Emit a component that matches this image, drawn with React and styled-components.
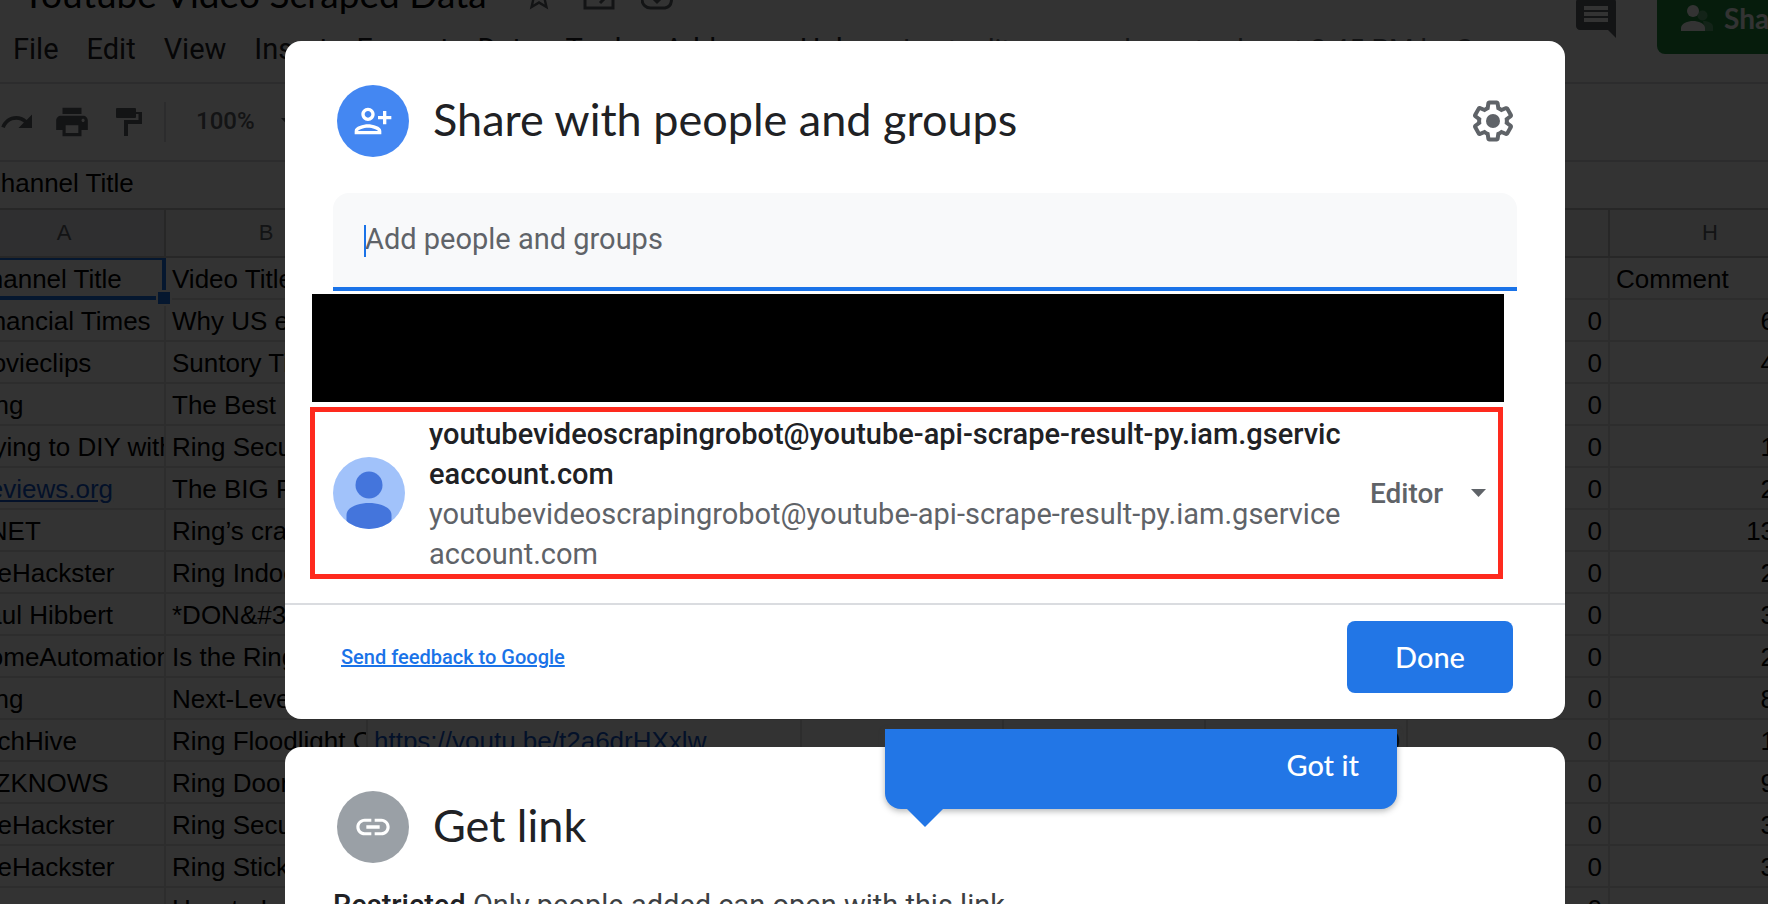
import React from "react";
import styled, { createGlobalStyle } from "styled-components";

const roboto = `Roboto, "Liberation Sans", sans-serif`;
const arial = `"Liberation Sans", Arial, sans-serif`;
const display = `Lato, Roboto, sans-serif`;

const GlobalStyle = createGlobalStyle`
  *, *::before, *::after { box-sizing: border-box; }
  body { margin: 0; background: #fff; font-family: ${roboto}; overflow: hidden; }
`;

const Page = styled.div`
  position: relative;
  height: 100vh;
  overflow: hidden;
`;

/* ---------- spreadsheet behind the dialog ---------- */

const Workbook = styled.div`
  width: calc(100% + 80px);
  margin: -24px 0 0 -36px;
`;

const Header = styled.header`
  display: flex;
  justify-content: space-between;
  border-bottom: 2px solid #dadce0;
`;

const TitleRow = styled.div`
  display: flex;
  align-items: center;
  gap: 26px;
  height: 40px;
  padding-left: 58px;
  color: #5f6368;
`;

const DocTitle = styled.h1`
  margin: 0 8px 0 0;
  padding-bottom: 4px;
  font: 400 37px/36px ${display};
  color: #000;
`;

const MenuBar = styled.nav`
  display: flex;
  align-items: center;
  gap: 28px;
  height: 66px;
  padding-left: 49px;
  font-size: 29px;
  color: #202124;
  white-space: nowrap;
`;

const LastEdit = styled.a`
  margin-left: 16px;
  font-size: 28px;
  color: #5f6368;
`;

const Actions = styled.div`
  display: flex;
  align-items: center;
  gap: 37px;
  height: 72px;
  margin-top: 6px;
  color: #5f6368;
`;

const ShareButton = styled.button`
  display: flex;
  align-items: center;
  gap: 11px;
  width: 155px;
  height: 72px;
  padding: 0 0 0 24px;
  border: 0;
  border-radius: 8px;
  background: #1e8e3e;
  color: #fff;
  font: 700 28px/40px ${display};
`;

const Toolbar = styled.div`
  display: flex;
  align-items: center;
  height: 78px;
  padding-left: 35px;
  border-bottom: 2px solid #dadce0;
  color: #5f6368;
`;

const Tool = styled.span`
  display: flex;
  margin-right: ${(p) => p.$after}px;
`;

const Rule = styled.span`
  width: 2px;
  height: 40px;
  margin-right: 30px;
  background: #dadce0;
`;

const Zoom = styled.span`
  margin-right: 26px;
  padding-bottom: 2px;
  font-size: 24px;
  font-weight: 500;
`;

const FormulaBar = styled.div`
  height: 48px;
  padding-left: 18px;
  border-bottom: 2px solid #c0c0c0;
  font: 26px/42px ${arial};
  color: #000;
`;

const Sheet = styled.table`
  width: 1848px;
  table-layout: fixed;
  border-collapse: separate;
  border-spacing: 0;
  font: 26px/42px ${arial};
  color: #000;
`;

const ColumnHead = styled.th`
  height: 48px;
  padding: 0;
  border-right: 2px solid #c0c0c0;
  border-bottom: 2px solid #c0c0c0;
  background: ${(p) => (p.$selected ? "#e8eaed" : "#f4f6f5")};
  color: #5f6368;
  font-size: 22px;
  font-weight: 400;
`;

const Cell = styled.td`
  position: relative;
  height: 42px;
  padding: 0;
  border-right: 2px solid #e0e0e0;
  border-bottom: 2px solid #e0e0e0;
`;

const CellText = styled.div`
  height: 40px;
  padding-left: 6px;
  padding-right: ${(p) => (p.$number ? 6 : 0)}px;
  overflow: hidden;
  white-space: nowrap;
  text-align: ${(p) => (p.$number ? "right" : "left")};

  a { color: #1155cc; }
`;

const Selection = styled.span`
  position: absolute;
  inset: 0 -2px -2px 0;
  z-index: 1;
  border: solid #1a73e8;
  border-width: 2px 4px 4px 2px;

  &::after {
    content: "";
    position: absolute;
    right: -10px;
    bottom: -10px;
    width: 16px;
    height: 16px;
    border: 2px solid #fff;
    background: #1a73e8;
  }
`;

const Backdrop = styled.div`
  position: absolute;
  inset: 0;
  z-index: 2;
  display: flex;
  flex-direction: column;
  gap: 28px;
  padding: 41px 203px 0 285px;
  background: rgba(0, 0, 0, 0.8);
`;

/* ---------- dialog cards ---------- */

const Card = styled.section`
  position: relative;
  flex: none;
  padding-top: 44px;
  border-radius: 16px;
  background: #fff;
  color: #202124;
`;

const CardHead = styled.div`
  display: flex;
  align-items: center;
  gap: 24px;
  padding: 0 48px 0 52px;
`;

const Badge = styled.span`
  display: flex;
  align-items: center;
  justify-content: center;
  flex: none;
  width: 72px;
  height: 72px;
  border-radius: 50%;
  background: ${(p) => p.$color};
  color: #fff;
`;

const CardTitle = styled.h2`
  flex: 1;
  margin: 0;
  padding-bottom: 4px;
  font: 400 45px/56px ${display};
`;

const IconButton = styled.button`
  display: flex;
  padding: 0;
  border: 0;
  background: none;
  color: #5f6368;
`;

const PeopleInput = styled.input`
  display: block;
  width: calc(100% - 96px);
  height: 98px;
  margin: 36px 48px 0;
  padding: 0 32px 2px;
  border: 0;
  border-bottom: 4px solid #1a73e8;
  border-radius: 16px 16px 0 0;
  outline: 0;
  background: #f8f9fa;
  font: 29px/40px ${roboto};
  color: #202124;
  caret-color: transparent;

  &::placeholder { color: #5f6368; opacity: 1; }
`;

const InputWrap = styled.label`
  position: relative;
  display: block;
`;

const Caret = styled.span`
  position: absolute;
  top: 32px;
  left: 79px;
  width: 2px;
  height: 32px;
  background: #1a73e8;
`;

const Redacted = styled.div`
  height: 108px;
  margin: 3px 61px 5px 27px;
  background: #000;
`;

const PersonRow = styled.div`
  display: flex;
  align-items: center;
  margin: 0 62px 0 25px;
  padding: 0 12px 0 18px;
  border: 5px solid #fe2a1e;
`;

const PersonText = styled.div`
  flex: 1;
  padding: 2px 0 0 24px;
  font-size: 29px;
  line-height: 40px;
  color: #5f6368;

  strong, span { display: block; }
  strong { font-weight: 500; color: #202124; }
`;

const RoleSelect = styled.select`
  appearance: none;
  margin-right: 27px;
  padding: 2px 0 0;
  border: 0;
  background: none;
  font: 500 28px/40px ${roboto};
  color: #5f6368;
`;

const CardFoot = styled.div`
  display: flex;
  align-items: center;
  justify-content: space-between;
  margin-top: 24px;
  padding: 16px 52px 26px 56px;
  border-top: 2px solid #dadce0;
`;

const FeedbackLink = styled.a`
  font-size: 20px;
  font-weight: 500;
  line-height: 24px;
  color: #1a73e8;
`;

const DoneButton = styled.button`
  width: 166px;
  height: 72px;
  border: 0;
  border-radius: 8px;
  background: #2276e6;
  color: #fff;
  font: 500 29px/40px ${display};
`;

const Access = styled.p`
  margin: 22px 48px 24px;
  font-size: 29px;
  line-height: 40px;
  color: #3c4043;

  b { font-weight: 500; color: #202124; }
`;

const Callout = styled.div`
  position: absolute;
  top: -18px;
  left: 600px;
  display: flex;
  justify-content: flex-end;
  width: 512px;
  height: 80px;
  padding: 16px 38px;
  border-radius: 0 0 16px 16px;
  background: #2276e6;
  box-shadow: 0 2px 6px rgba(60, 64, 67, 0.4);

  &::after {
    content: "";
    position: absolute;
    top: 100%;
    left: 22px;
    border: solid transparent;
    border-width: 18px 18px 0;
    border-top-color: #2276e6;
  }
`;

const GotIt = styled.button`
  height: 40px;
  padding: 0;
  border: 0;
  background: none;
  color: #fff;
  font: 500 29px/40px ${display};
`;

/* ---------- drawings ---------- */

const Icon = ({ size, d, children }) => (
  <svg width={size} height={size} viewBox="0 0 24 24" fill="currentColor" aria-hidden="true">
    {d && <path d={d} />}
    {children}
  </svg>
);

const paths = {
  star: "M22 9.24l-7.19-.62L12 2 9.19 8.63 2 9.24l5.46 4.73L5.82 21 12 17.27 18.18 21l-1.63-7.03L22 9.24zM12 15.4l-3.76 2.27 1-4.28-3.32-2.88 4.38-.38L12 6.1l1.71 4.04 4.38.38-3.32 2.88 1 4.28L12 15.4z",
  comment: "M20 2H4c-1.1 0-1.99.9-1.99 2L2 16c0 1.1.9 2 2 2h14l4 4V4c0-1.1-.9-2-2-2zm-2 12H6v-2h12v2zm0-3H6V9h12v2zm0-3H6V6h12v2z",
  redo: "M18.4 10.6C16.55 8.99 14.15 8 11.5 8c-4.65 0-8.58 3.03-9.96 7.22L3.9 16c1.05-3.19 4.05-5.5 7.6-5.5 1.95 0 3.73.72 5.12 1.88L13 16h9V7l-3.6 3.6z",
  print: "M19 8H5c-1.66 0-3 1.34-3 3v6h4v4h12v-4h4v-6c0-1.66-1.34-3-3-3zm-3 11H8v-5h8v5zm3-7c-.55 0-1-.45-1-1s.45-1 1-1 1 .45 1 1-.45 1-1 1zm-1-9H6v4h12V3z",
  addPerson: "M9 12c2.21 0 4-1.79 4-4s-1.79-4-4-4-4 1.79-4 4 1.79 4 4 4zm0-6c1.1 0 2 .9 2 2s-.9 2-2 2-2-.9-2-2 .9-2 2-2zm0 8c-2.67 0-8 1.34-8 4v2h16v-2c0-2.66-5.33-4-8-4zM3 18c.2-.71 3.3-2 6-2 2.69 0 5.77 1.28 6 2H3zM20 9V6h-2v3h-3v2h3v3h2v-3h3V9z",
  link: "M3.9 12c0-1.71 1.39-3.1 3.1-3.1h4V7H7c-2.76 0-5 2.24-5 5s2.24 5 5 5h4v-1.9H7c-1.71 0-3.1-1.39-3.1-3.1zM8 13h8v-2H8v2zm9-6h-4v1.9h4c1.71 0 3.1 1.39 3.1 3.1s-1.39 3.1-3.1 3.1h-4V17h4c2.76 0 5-2.24 5-5s-2.24-5-5-5z",
  gear: "M13.85 22.25h-3.7c-.74 0-1.36-.54-1.45-1.27l-.27-1.89c-.27-.14-.53-.29-.79-.46l-1.8.72c-.7.26-1.47-.03-1.81-.65L2.2 15.53c-.35-.66-.2-1.44.36-1.88l1.53-1.19c-.01-.15-.02-.3-.02-.46 0-.15.01-.31.02-.46l-1.52-1.19c-.59-.45-.74-1.26-.37-1.88l1.85-3.19c.34-.62 1.11-.9 1.79-.63l1.81.73c.26-.17.52-.32.78-.46l.27-1.91c.09-.7.71-1.25 1.44-1.25h3.7c.74 0 1.36.54 1.45 1.27l.27 1.89c.27.14.53.29.79.46l1.8-.72c.71-.26 1.48.03 1.82.65l1.84 3.18c.36.66.2 1.44-.36 1.88l-1.52 1.19c.01.15.02.3.02.46s-.01.31-.02.46l1.52 1.19c.56.45.72 1.23.37 1.86l-1.86 3.22c-.34.62-1.11.9-1.8.63l-1.8-.72c-.26.17-.52.32-.78.46l-.27 1.91c-.1.68-.72 1.22-1.46 1.22zm-3.23-2h2.76l.37-2.55.53-.22c.44-.18.88-.44 1.34-.78l.45-.34 2.38.96 1.38-2.4-2.03-1.58.07-.56c.03-.26.06-.51.06-.78s-.03-.53-.06-.78l-.07-.56 2.03-1.58-1.39-2.4-2.39.96-.45-.35c-.42-.32-.87-.58-1.33-.77l-.52-.22-.37-2.55h-2.76l-.37 2.55-.53.21c-.44.19-.88.44-1.34.79l-.45.33-2.38-.95-1.39 2.39 2.03 1.58-.07.56a7 7 0 0 0-.06.79c0 .26.02.53.06.78l.07.56-2.03 1.58 1.38 2.4 2.39-.96.45.35c.43.33.86.58 1.33.77l.53.22.38 2.55z",
};

const MoveIcon = () => (
  <svg width="32" height="28" viewBox="0 0 32 28" fill="none" stroke="currentColor" strokeWidth="3" aria-hidden="true">
    <path d="M2 3h10l3 4h15v19H2z" />
    <path d="M10 16h11M17 11l5 5-5 5" />
  </svg>
);

const CloudIcon = () => (
  <svg width="34" height="28" viewBox="0 0 34 28" fill="none" stroke="currentColor" strokeWidth="3" aria-hidden="true">
    <path d="M10 26h14a8 8 0 0 0 2-15A9.5 9.5 0 0 0 9 9a8.5 8.5 0 0 0 1 17z" />
    <path d="M12 16l4 4 7-7" />
  </svg>
);

const PaintIcon = () => (
  <svg width="26" height="28" viewBox="0 0 26 28" fill="currentColor" aria-hidden="true">
    <rect width="20" height="10" rx="1" />
    <path d="M20 4h6v12H12v12H8V12h14.500V6H20z" />
  </svg>
);

const PeopleIcon = () => (
  <svg width="32" height="26" viewBox="0 0 32 26" fill="#fff" aria-hidden="true">
    <circle cx="21.5" cy="10.5" r="5" opacity=".3" />
    <path d="M22 16c6 0 10 2.500 10 6v4h-8z" opacity=".3" />
    <circle cx="12" cy="6" r="6" />
    <path d="M0 26v-3c0-4.500 7-7 12-7s12 2.500 12 7v3z" />
  </svg>
);

const ArrowDown = () => (
  <svg width="15" height="8" viewBox="0 0 15 8" fill="#5f6368" aria-hidden="true">
    <path d="M0 0h15L7.500 8z" />
  </svg>
);

const Avatar = () => (
  <svg width="72" height="72" viewBox="0 0 72 72" aria-hidden="true">
    <clipPath id="avatar-clip">
      <circle cx="36" cy="36" r="36" />
    </clipPath>
    <g clipPath="url(#avatar-clip)">
      <rect width="72" height="72" fill="#a1c2fa" />
      <circle cx="36" cy="28" r="13.5" fill="#4475dc" />
      <path d="M13.500 72V58c0-8 12-12 22.500-12s22.500 4 22.500 12v14z" fill="#4475dc" />
    </g>
  </svg>
);

/* ---------- data ---------- */

const columns = [
  ["A", 202],
  ["B", 202],
  ["C", 434],
  ["D", 202],
  ["E", 202],
  ["F", 202],
  ["G", 202],
  ["H", 202],
];

const videos = [
  ["Financial Times", "Why US elections matter", "612"],
  ["Movieclips", "Suntory Time", "431"],
  ["Ring", "The Best Ring Video", "52"],
  ["Trying to DIY with it", "Ring Security Review", "124"],
  ["Reviews.org", "The BIG Ring Review", "236"],
  ["CNET", "Ring’s crazy drone", "1342"],
  ["LifeHackster", "Ring Indoor Cam", "218"],
  ["Paul Hibbert", "*DON&#39;T buy Ring", "345"],
  ["HomeAutomationX", "Is the Ring Alarm good", "207"],
  ["Ring", "Next-Level Security", "864"],
  ["TechHive", "Ring Floodlight Cam", "163"],
  ["WZKNOWS", "Ring Doorbell Pro", "918"],
  ["LifeHackster", "Ring Security Cam", "327"],
  ["LifeHackster", "Ring Stick Up Cam", "361"],
  ["Ring", "How to Install Ring", "58"],
];

const menus = ["File", "Edit", "View", "Insert", "Format", "Data", "Tools", "Add-ons", "Help"];

const TextCell = ({ children, number }) => (
  <Cell>
    <CellText $number={number}>{children}</CellText>
  </Cell>
);

function Spreadsheet() {
  return (
    <Workbook>
      <Header>
        <div>
          <TitleRow>
            <DocTitle>Youtube Video Scraped Data</DocTitle>
            <Icon size={36} d={paths.star} />
            <MoveIcon />
            <CloudIcon />
          </TitleRow>
          <MenuBar>
            {menus.map((m) => (
              <span key={m}>{m}</span>
            ))}
            <LastEdit href="#history">Last edit was made yesterday at 3:45 PM by S</LastEdit>
          </MenuBar>
        </div>
        <Actions>
          <Icon size={48} d={paths.comment} />
          <ShareButton type="button">
            <PeopleIcon />
            Share
          </ShareButton>
        </Actions>
      </Header>
      <Toolbar>
        <Tool $after={18}><Icon size={36} d={paths.redo} /></Tool>
        <Tool $after={25}><Icon size={38} d={paths.print} /></Tool>
        <Tool $after={22}><PaintIcon /></Tool>
        <Rule />
        <Zoom>100%</Zoom>
        <ArrowDown />
      </Toolbar>
      <FormulaBar>Channel Title</FormulaBar>
      <Sheet>
        <colgroup>
          {columns.map(([name, width]) => (
            <col key={name} width={width} />
          ))}
        </colgroup>
        <thead>
          <tr>
            {columns.map(([name]) => (
              <ColumnHead key={name} $selected={name === "A"}>{name}</ColumnHead>
            ))}
          </tr>
        </thead>
        <tbody>
          <tr>
            <Cell>
              <CellText>Channel Title</CellText>
              <Selection />
            </Cell>
            <TextCell>Video Title</TextCell>
            <TextCell />
            <TextCell />
            <TextCell />
            <TextCell />
            <TextCell />
            <TextCell>Comment</TextCell>
          </tr>
          {videos.map(([channel, title, comments], i) => (
            <tr key={i}>
              <TextCell>
                {channel === "Reviews.org" ? <a href="#reviews">{channel}</a> : channel}
              </TextCell>
              <TextCell>{title}</TextCell>
              <TextCell>
                {channel === "TechHive" && <a href="#video">https://youtu.be/t2a6drHXxlw</a>}
              </TextCell>
              <TextCell />
              <TextCell />
              <TextCell number>{channel === "TechHive" && "0"}</TextCell>
              <TextCell number>0</TextCell>
              <TextCell number>{comments}</TextCell>
            </tr>
          ))}
        </tbody>
      </Sheet>
    </Workbook>
  );
}

export default function App() {
  return (
    <Page>
      <GlobalStyle />
      <Spreadsheet />
      <Backdrop>
        <Card>
          <CardHead>
            <Badge $color="#4487f2"><Icon size={40} d={paths.addPerson} /></Badge>
            <CardTitle>Share with people and groups</CardTitle>
            <IconButton type="button" aria-label="Settings">
              <Icon size={48} d={paths.gear}>
                <circle cx="12" cy="12" r="3.5" />
              </Icon>
            </IconButton>
          </CardHead>
          <InputWrap>
            <PeopleInput aria-label="Add people and groups" placeholder="Add people and groups" />
            <Caret />
          </InputWrap>
          <Redacted />
          <PersonRow>
            <Avatar />
            <PersonText>
              <strong>youtubevideoscrapingrobot@youtube-api-scrape-result-py.iam.gservic</strong>
              <strong>eaccount.com</strong>
              <span>youtubevideoscrapingrobot@youtube-api-scrape-result-py.iam.gservice</span>
              <span>account.com</span>
            </PersonText>
            <RoleSelect aria-label="Role" defaultValue="Editor">
              <option>Editor</option>
            </RoleSelect>
            <ArrowDown />
          </PersonRow>
          <CardFoot>
            <FeedbackLink href="#feedback">Send feedback to Google</FeedbackLink>
            <DoneButton type="button">Done</DoneButton>
          </CardFoot>
        </Card>
        <Card>
          <CardHead>
            <Badge $color="#9aa0a6"><Icon size={40} d={paths.link} /></Badge>
            <CardTitle>Get link</CardTitle>
          </CardHead>
          <Access>
            <b>Restricted</b> Only people added can open with this link
          </Access>
          <Callout>
            <GotIt type="button">Got it</GotIt>
          </Callout>
        </Card>
      </Backdrop>
    </Page>
  );
}
